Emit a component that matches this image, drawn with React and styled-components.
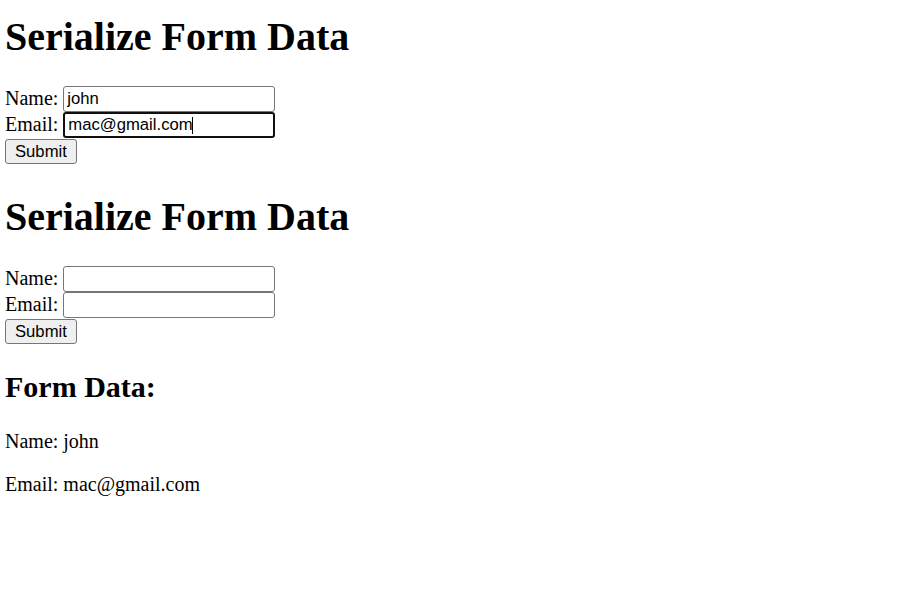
import React, { useState } from 'react';
import styled, { createGlobalStyle } from 'styled-components';

const GlobalStyle = createGlobalStyle`
  html, body {
    margin: 0;
    padding: 0;
    background: #fff;
  }
  body {
    font-family: "Liberation Serif", "Times New Roman", serif;
    font-size: 20px;
    color: #000;
  }
`;

const Page = styled.div`
  padding: 0 5px;
`;

const Title = styled.h1`
  font-size: 40px;
  font-weight: bold;
  line-height: normal;
  margin: ${(p) => (p.$first ? '13px' : '27px')} 0 26px;
`;

const Form = styled.form`
  margin: 0;
  padding-bottom: 2px;
`;

const Row = styled.div`
  display: flex;
  align-items: center;
  gap: 5px;
  height: 26px;
`;

const Label = styled.label`
  font-size: 20px;
  line-height: 24px;
  padding-bottom: 2px;
`;

const Field = styled.span`
  position: relative;
  display: inline-flex;
`;

const Input = styled.input`
  box-sizing: border-box;
  width: 212px;
  height: 26px;
  margin: 0;
  padding: 0 3px;
  font-family: "Liberation Sans", Arial, sans-serif;
  font-size: 16.67px;
  color: #000;
  background: #fff;
  border: ${(p) => (p.$focused ? '2px solid #101010' : '1px solid #767676')};
  border-radius: 3px;
  outline: none;
  caret-color: transparent;
`;

const Caret = styled.span`
  position: absolute;
  left: ${(p) => p.$at}px;
  top: 5px;
  width: 1px;
  height: 17px;
  background: #000;
  pointer-events: none;
`;

const Button = styled.button`
  box-sizing: border-box;
  margin-top: 1px;
  height: 25px;
  padding: 0 9px;
  font-family: "Liberation Sans", Arial, sans-serif;
  font-size: 16.67px;
  color: #000;
  background: #efefef;
  border: 1px solid #767676;
  border-radius: 3px;
`;

const SubTitle = styled.h2`
  font-size: 30px;
  font-weight: bold;
  line-height: normal;
  margin: 24px 0 26px;
`;

const Line = styled.p`
  font-size: 20px;
  line-height: normal;
  margin: 20px 0;
`;

function SerializeForm({ name, email, focused, onNameChange, onEmailChange }) {
  return (
    <Form onSubmit={(e) => e.preventDefault()}>
      <Row>
        <Label>Name:</Label>
        <Input type="text" value={name} onChange={onNameChange} />
      </Row>
      <Row>
        <Label>Email:</Label>
        <Field>
          <Input
            type="text"
            value={email}
            onChange={onEmailChange}
            $focused={focused}
          />
          {focused && <Caret $at={129} />}
        </Field>
      </Row>
      <Button type="submit">Submit</Button>
    </Form>
  );
}

export default function App() {
  const [name, setName] = useState('john');
  const [email, setEmail] = useState('mac@gmail.com');
  const [name2, setName2] = useState('');
  const [email2, setEmail2] = useState('');

  return (
    <Page>
      <GlobalStyle />
      <Title $first>Serialize Form Data</Title>
      <SerializeForm
        name={name}
        email={email}
        focused
        onNameChange={(e) => setName(e.target.value)}
        onEmailChange={(e) => setEmail(e.target.value)}
      />

      <Title>Serialize Form Data</Title>
      <SerializeForm
        name={name2}
        email={email2}
        onNameChange={(e) => setName2(e.target.value)}
        onEmailChange={(e) => setEmail2(e.target.value)}
      />

      <SubTitle>Form Data:</SubTitle>
      <Line>Name: john</Line>
      <Line>Email: mac@gmail.com</Line>
    </Page>
  );
}
